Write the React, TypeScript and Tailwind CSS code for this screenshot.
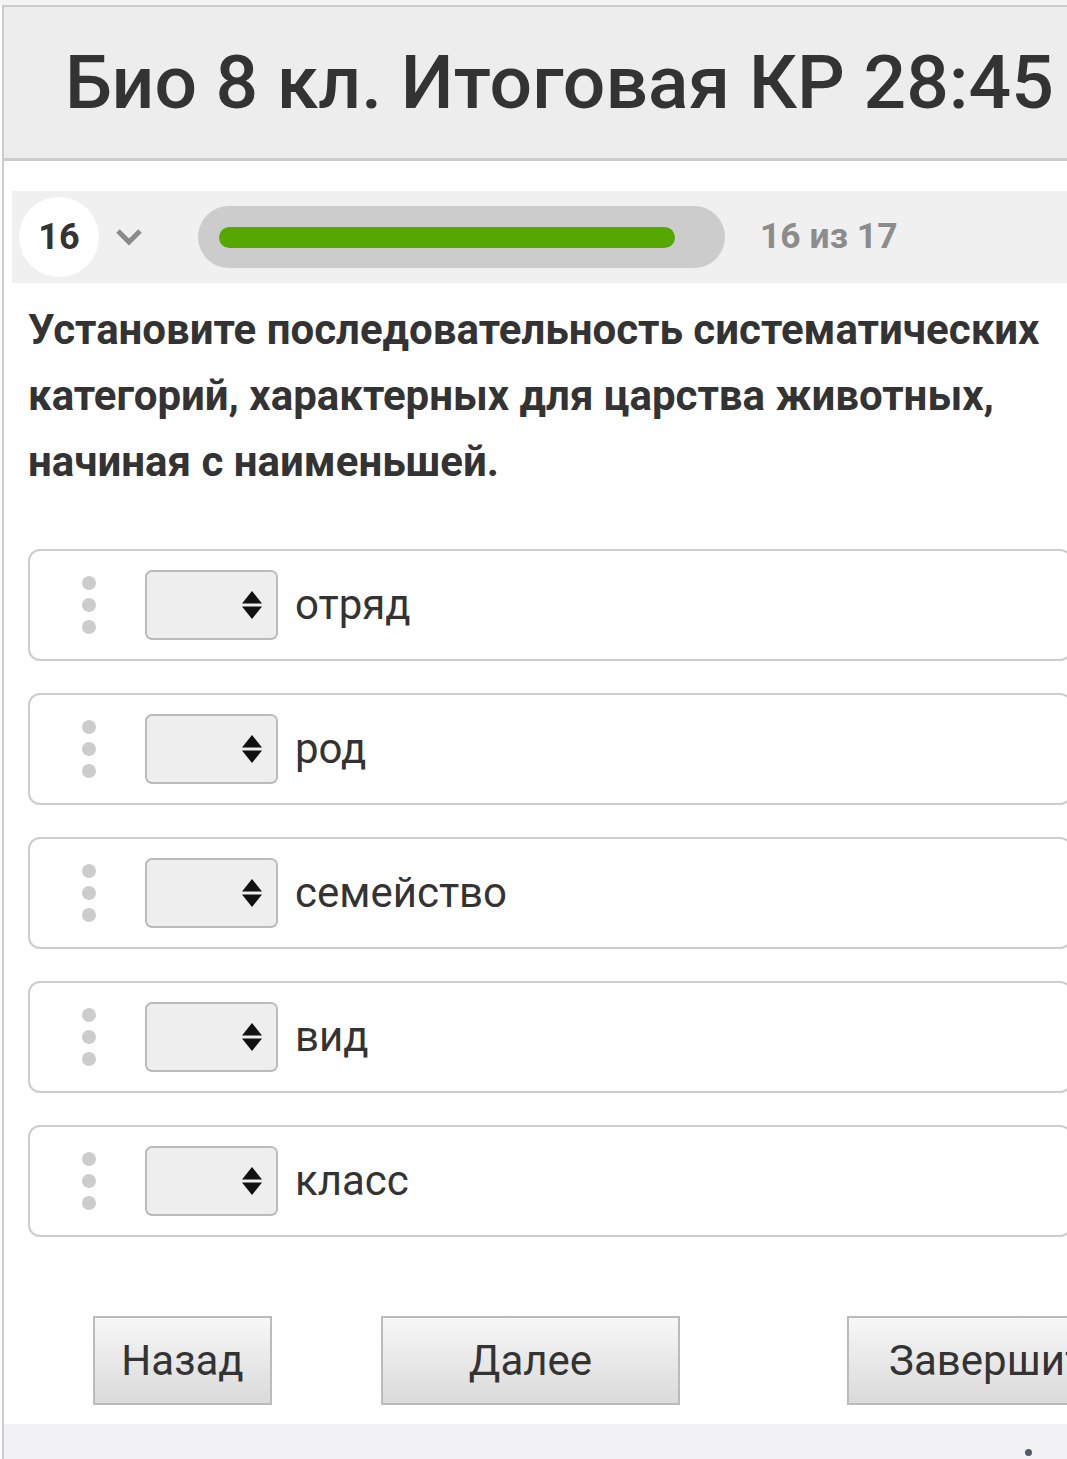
import { useState } from 'react'

const items = ['отряд', 'род', 'семейство', 'вид', 'класс']

function Dots() {
  return (
    <div className="flex w-[14px] flex-col gap-[8px]">
      <span className="h-[14px] w-[14px] rounded-full bg-[#cccccc]" />
      <span className="h-[14px] w-[14px] rounded-full bg-[#cccccc]" />
      <span className="h-[14px] w-[14px] rounded-full bg-[#cccccc]" />
    </div>
  )
}

function SelectBox() {
  return (
    <div className="flex h-[70px] w-[133px] items-center justify-end rounded-[7px] border-2 border-[#bbbbbb] bg-[#eeeeee] pr-[14px]">
      <svg width="20" height="28" viewBox="0 0 20 28">
        <polygon points="10,0 20,12.5 0,12.5" fill="#111" />
        <polygon points="0,15.5 20,15.5 10,28" fill="#111" />
      </svg>
    </div>
  )
}

export default function App() {
  const [current] = useState(16)
  const total = 17
  const progress = (current / total) * 100

  return (
    <div className="h-[1459px] w-[1067px] overflow-hidden bg-white font-['Roboto',sans-serif] text-[#333333]">
      <div className="h-[5px] bg-[#f4f4f4]" />
      <div className="ml-[2px] flex h-[1454px] w-[1100px] flex-col border-l-2 border-[#cccccc]">
        {/* header */}
        <div className="flex h-[156px] shrink-0 items-center border-t-2 border-b-[3px] border-[#cccccc] bg-[#ededed] pl-[61px]">
          <h1 className="whitespace-nowrap text-[75px] font-medium leading-none text-[#333333]">
            Био 8 кл. Итоговая КР 28:45
          </h1>
        </div>

        {/* progress strip */}
        <div className="ml-[8px] mt-[30px] flex h-[92px] shrink-0 items-center bg-[#f0f0f0] pl-[7px]">
          <div className="flex h-[80px] w-[80px] shrink-0 items-center justify-center rounded-full bg-white text-[36px] font-bold text-[#333333]">
            {current}
          </div>
          <svg className="ml-[16px] shrink-0" width="28" height="18" viewBox="0 0 28 18">
            <path d="M3 3 L14 14 L25 3" fill="none" stroke="#8a8a8a" strokeWidth="5" />
          </svg>
          <div className="ml-[55px] flex h-[62px] w-[527px] shrink-0 items-center rounded-full bg-[#cccccc] px-[21px]">
            <div className="h-[21px] w-full">
              <div className="h-[21px] rounded-full bg-[#56a800]" style={{ width: `${progress}%` }} />
            </div>
          </div>
          <span className="ml-[35px] text-[35.5px] font-bold text-[#8c8c8c]">
            {current} из {total}
          </span>
        </div>

        {/* question */}
        <p className="mt-[14px] w-[1070px] shrink-0 pl-[24px] text-[42px] font-bold leading-[66px] text-[#333333]">
          Установите последовательность систематических категорий, характерных для царства животных, начиная с наименьшей.
        </p>

        {/* options */}
        <div className="ml-[24px] mt-[54px] flex w-[1044px] shrink-0 flex-col gap-[32px]">
          {items.map((item) => (
            <div
              key={item}
              className="flex h-[112px] items-center rounded-[12px] border-2 border-[#cccccc] bg-white pl-[52px]"
            >
              <Dots />
              <div className="ml-[49px]">
                <SelectBox />
              </div>
              <span className="ml-[17px] text-[42px] leading-none text-[#333333]">{item}</span>
            </div>
          ))}
        </div>

        {/* buttons */}
        <div className="ml-[89px] mt-[79px] flex h-[89px] shrink-0 items-stretch">
          <button className="w-[179px] shrink-0 border-2 border-[#bbbbbb] bg-gradient-to-b from-[#f7f7f7] to-[#dadada] text-[42px] text-[#333333]">
            Назад
          </button>
          <button className="ml-[109px] w-[299px] shrink-0 border-2 border-[#bbbbbb] bg-gradient-to-b from-[#f7f7f7] to-[#dadada] text-[42px] text-[#333333]">
            Далее
          </button>
          <button className="ml-[167px] w-[300px] shrink-0 whitespace-nowrap border-2 border-[#bbbbbb] bg-gradient-to-b from-[#f7f7f7] to-[#dadada] pl-[40px] text-left text-[42px] text-[#333333]">
            Завершить
          </button>
        </div>

        {/* footer strip */}
        <div className="mt-[19px] flex h-[40px] shrink-0 justify-start bg-[#f2f2f4] pl-[1021px] pt-[25px]">
          <span className="h-[7px] w-[7px] rounded-full bg-[#555a66]" />
        </div>
      </div>
    </div>
  )
}
